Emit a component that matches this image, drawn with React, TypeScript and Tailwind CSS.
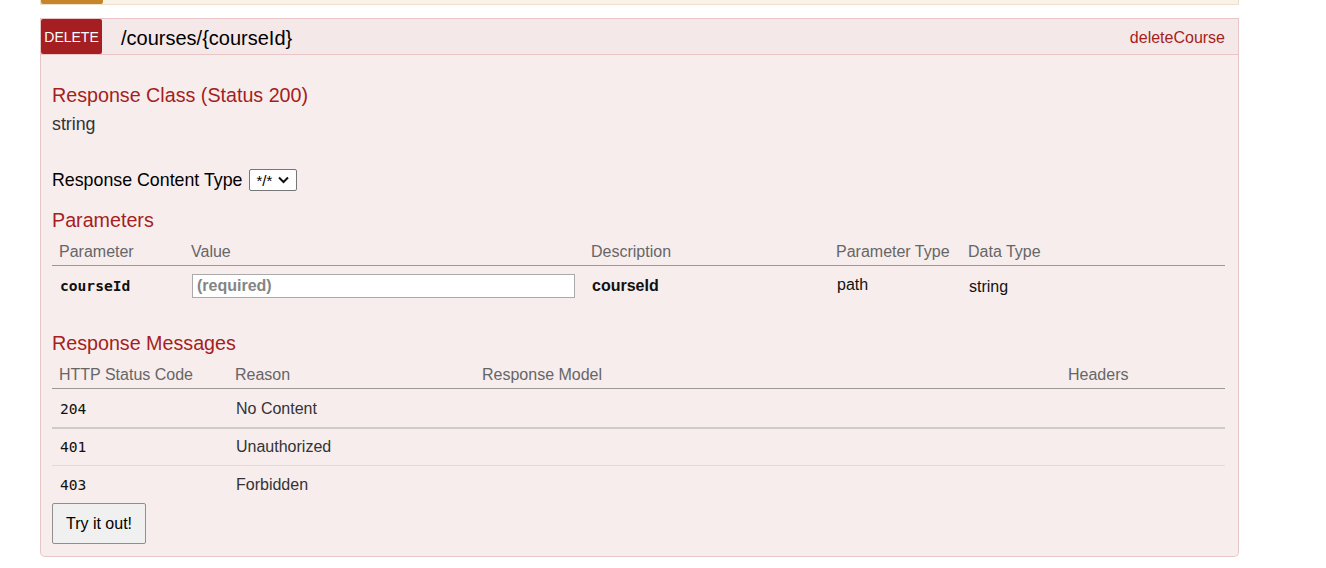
import React from "react";

const sans = { fontFamily: '"Liberation Sans", Arial, sans-serif' };
const mono = { fontFamily: '"DejaVu Sans Mono", "Liberation Mono", monospace' };

export default function App() {
  return (
    <div className="w-[1326px] h-[568px] bg-white overflow-hidden" style={sans}>
      <div className="ml-[40px] w-[1199px]">
        {/* previous collapsed PUT heading */}
        <div className="h-[5px] bg-[#f9f2e9] border-b border-x border-[#f0e0ca] flex">
          <div className="w-[62px] h-[4px] bg-[#c5862b] rounded-b-[2px]" />
        </div>

        {/* DELETE heading */}
        <div className="mt-[13px] h-[37px] bg-[#f5e8e8] border border-[#e8c6c7] flex items-center">
          <div className="w-[61px] h-[35px] bg-[#a41e22] rounded-[2px] text-white text-[14px] flex items-center justify-center pt-[2px]">
            DELETE
          </div>
          <div className="ml-[19px] text-[20px] text-black leading-none pt-[2px]">/courses/{"{courseId}"}</div>
          <div className="ml-auto mr-[13px] text-[16px] text-[#a41e22] pt-[2px]">deleteCourse</div>
        </div>

        {/* content */}
        <div className="bg-[#f7eded] border-x border-b border-[#e8c6c7] rounded-b-[5px] pl-[11px] pr-[13px] pt-[28px] pb-[12px]">
          <h4 className="text-[19.7px] leading-[24px] text-[#a41e22]">Response Class (Status 200)</h4>
          <div className="mt-[6px] text-[17.8px] leading-[22px] text-[#333]">string</div>

          <div className="mt-[34px] flex items-center h-[22px]">
            <span className="text-[17.8px] text-black">Response Content Type</span>
            <div className="ml-[7px] h-[22px] w-[48px] border border-[#767676] rounded-[2px] bg-white flex items-center pl-[6px] gap-[6px]">
              <span className="text-[15px] text-black leading-none">*/*</span>
              <svg width="11" height="8" viewBox="0 0 11 8" fill="none">
                <path d="M1 1.5 L5.5 6 L10 1.5" stroke="#111" strokeWidth="2" />
              </svg>
            </div>
          </div>

          <h4 className="mt-[17px] text-[19.7px] leading-[24px] text-[#a41e22]">Parameters</h4>
          <div className="grid grid-cols-[133px_400px_245px_132px_1fr] h-[34px] border-b border-[#999] pt-[10px] text-[16px] leading-[20px] text-[#666]">
            <div className="pl-[7px]">Parameter</div>
            <div className="pl-[6px]">Value</div>
            <div className="pl-[6px]">Description</div>
            <div className="pl-[6px]">Parameter Type</div>
            <div className="pl-[6px]">Data Type</div>
          </div>
          <div className="grid grid-cols-[133px_400px_245px_132px_1fr] h-[40px] items-center text-[16px] text-[#111]">
            <div className="pl-[8px] font-bold text-[14.6px]" style={mono}>
              courseId
            </div>
            <div className="pl-[7px]">
              <input
                className="w-[383px] h-[24px] bg-white border border-[#aaa] px-[4px] text-[16px] font-bold outline-none placeholder:text-[#858585] placeholder:font-bold"
                placeholder="(required)"
                style={sans}
              />
            </div>
            <div className="pl-[7px] font-bold">courseId</div>
            <div className="pl-[7px] -mt-[3px]">path</div>
            <div className="pl-[7px] pt-[1px]">string</div>
          </div>

          <h4 className="mt-[25px] text-[19.7px] leading-[24px] text-[#a41e22]">Response Messages</h4>
          <div className="grid grid-cols-[177px_247px_586px_1fr] h-[34px] border-b border-[#999] pt-[10px] text-[16px] leading-[20px] text-[#666]">
            <div className="pl-[7px]">HTTP Status Code</div>
            <div className="pl-[6px]">Reason</div>
            <div className="pl-[6px]">Response Model</div>
            <div className="pl-[6px]">Headers</div>
          </div>
          {[
            { code: "204", reason: "No Content", h: "h-[40px] pt-[2px] border-b-2 border-[#ccc]" },
            { code: "401", reason: "Unauthorized", h: "h-[37px] border-b border-[#ddd]" },
            { code: "403", reason: "Forbidden", h: "h-[37px]" },
          ].map((r) => (
            <div key={r.code} className={`grid grid-cols-[177px_247px_586px_1fr] items-center text-[16px] text-[#333] ${r.h}`}>
              <div className="pl-[8px] text-[14.6px] text-[#111]" style={mono}>
                {r.code}
              </div>
              <div className="pl-[7px]">{r.reason}</div>
              <div />
              <div />
            </div>
          ))}

          <button className="h-[41px] w-[94px] bg-[#f0f0f0] border border-[#8f8f8f] rounded-[2px] text-[16px] text-black" style={sans}>
            Try it out!
          </button>
        </div>
      </div>
    </div>
  );
}
